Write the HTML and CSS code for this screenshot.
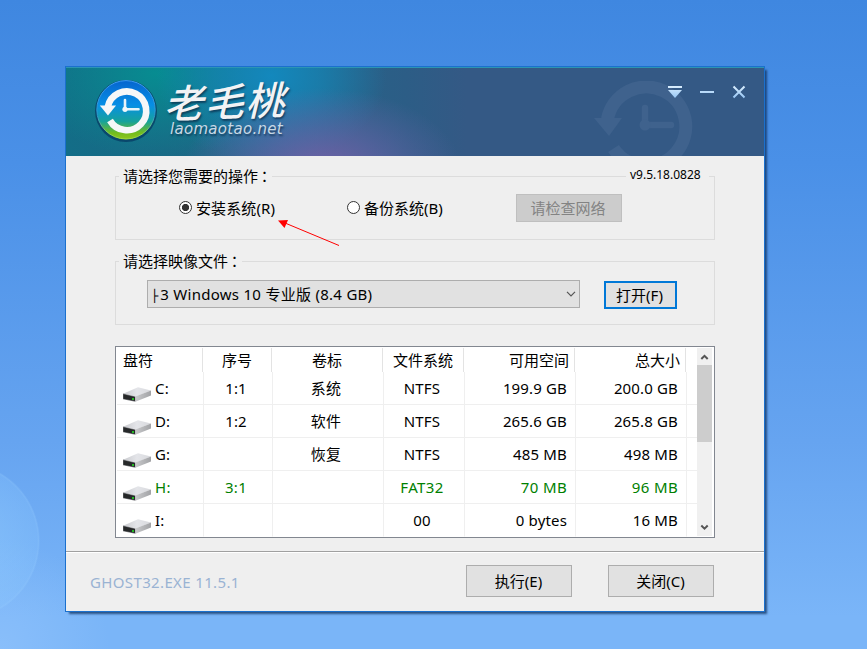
FILE: index.html
```html
<!DOCTYPE html>
<html lang="zh-CN">
<head>
<meta charset="utf-8">
<title>老毛桃</title>
<link rel="stylesheet" href="styles.css">
</head>
<body>
<svg width="0" height="0" class="defs">
  <defs>
    <linearGradient id="top" x1="0" x2="1"><stop offset="0" stop-color="#c9cace"/><stop offset=".5" stop-color="#e4e5e9"/><stop offset="1" stop-color="#d8d9dd"/></linearGradient>
    <linearGradient id="side" x1="0" x2="1"><stop offset="0" stop-color="#c9cacc"/><stop offset="1" stop-color="#a2a3a6"/></linearGradient>
    <symbol id="drive" viewBox="0 0 28 15">
      <path d="M0 6.800 15 .3 28 3.600 12.300 9.800Z" fill="url(#top)"/>
      <path d="M12.300 9.600 28 3.600V8.600L12.300 14.800Z" fill="url(#side)"/>
      <path d="M0 6.600 12.300 9.600V14.800L0 12.300Z" fill="#77797b"/>
      <path d="M.4 7.200 12 10V14L.4 11.800Z" fill="#262829"/>
      <rect x="9" y="11" width="2" height="2" fill="#22b822"/>
    </symbol>
  </defs>
</svg>
<main class="window">
  <header class="titlebar">
    <svg class="watermark" width="100" height="75" viewBox="593 81 100 75">
      <g fill="none" stroke="#3f628d">
        <path d="M607.500 119A39.500 39.500 0 1 1 613.500 148.500" stroke-width="13"/>
        <path d="M645 108V125H671" stroke-width="6.500" stroke-linecap="round"/>
      </g>
      <path d="M594 118H622L609 136Z" fill="#3f628d"/>
      <circle cx="645" cy="125" r="5.500" fill="#3f628d"/>
    </svg>
    <svg class="logo" width="66" height="66" viewBox="93 76 66 66">
      <defs>
        <linearGradient id="disc" x1="0" y1="0" x2="0" y2="1"><stop offset="0" stop-color="#0665cf"/><stop offset=".42" stop-color="#078fe5"/><stop offset=".7" stop-color="#17a29b"/><stop offset=".9" stop-color="#74bd1c"/><stop offset="1" stop-color="#8fc51e"/></linearGradient>
        <linearGradient id="rim" x1="0" y1="0" x2="0" y2="1"><stop offset="0" stop-color="#3b9bf3"/><stop offset=".6" stop-color="#2e9ad0"/><stop offset="1" stop-color="#a3dc38"/></linearGradient>
      </defs>
      <circle cx="126" cy="110" r="31" fill="#073a63" opacity=".75"/>
      <circle cx="126" cy="108.800" r="29.200" fill="url(#disc)" stroke="url(#rim)"/>
      <path d="M107.800 106A19.400 19.400 0 1 1 110 119.500" fill="none" stroke="#f6f7f8" stroke-width="6.600"/>
      <path d="M99.800 104.500H116L108 114.500Z" fill="#f6f7f8"/>
      <path d="M125 99V108.300H138.500" fill="none" stroke="#e6f4fa" stroke-width="2.600" stroke-linecap="round"/>
      <circle cx="125" cy="108.300" r="2.600" fill="#eef8fc"/>
    </svg>
    <div class="brand"><span class="name">老毛桃</span><span class="site">laomaotao.net</span></div>
    <svg class="controls" width="80" height="16" viewBox="667 85 80 16">
      <defs><linearGradient id="glyph" gradientUnits="userSpaceOnUse" x1="0" y1="85" x2="0" y2="99"><stop stop-color="#e0f2ff"/><stop offset="1" stop-color="#91c3f4"/></linearGradient></defs>
      <g fill="url(#glyph)"><path d="M668 86H682V88H668ZM668 90H682L675 98Z"/><rect x="700" y="91" width="14" height="2"/></g>
      <path d="M733.500 86.500 744.500 97.500M744.500 86.500 733.500 97.500" stroke="url(#glyph)" stroke-width="2"/>
    </svg>
  </header>
  <section class="body">
    <div class="group action">
      <div class="legend">请选择您需要的操作<i lang="zh-TW">：</i></div>
      <div class="version">v9.5.18.0828</div>
      <div class="choices">
        <label class="radio first"><span class="dot on"></span>安装系统(R)</label>
        <label class="radio second"><span class="dot"></span>备份系统(B)</label>
        <button class="btn network" disabled>请检查网络</button>
      </div>
      <svg class="pointer" width="64" height="29" viewBox="277 218 64 29"><path d="M285 223 339 245.500" stroke="#f00" fill="none"/><path d="M278 220.500 288 220 284.500 228Z" fill="#f00"/></svg>
    </div>
    <div class="group image">
      <div class="legend">请选择映像文件<i lang="zh-TW">：</i></div>
      <div class="choices">
        <div class="combo"><span><span class="branch">├</span>3 Windows 10 专业版 (8.4 GB)</span><svg width="10" height="6" viewBox="0 0 10 6"><path d="M1 .8 5 4.800 9 .8" fill="none" stroke="#555" stroke-width="1.200"/></svg></div>
        <button class="btn open">打开(F)</button>
      </div>
    </div>
    <div class="list">
      <div class="table">
        <div class="row head"><div>盘符</div><div>序号</div><div>卷标</div><div>文件系统</div><div>可用空间</div><div>总大小</div><div></div></div>
        <div class="row"><div><svg width="28" height="15"><use href="#drive"/></svg>C:</div><div>1:1</div><div>系统</div><div>NTFS</div><div>199.9 GB</div><div>200.0 GB</div><div></div></div>
        <div class="row"><div><svg width="28" height="15"><use href="#drive"/></svg>D:</div><div>1:2</div><div>软件</div><div>NTFS</div><div>265.6 GB</div><div>265.8 GB</div><div></div></div>
        <div class="row"><div><svg width="28" height="15"><use href="#drive"/></svg>G:</div><div></div><div>恢复</div><div>NTFS</div><div>485 MB</div><div>498 MB</div><div></div></div>
        <div class="row green"><div><svg width="28" height="15"><use href="#drive"/></svg>H:</div><div>3:1</div><div></div><div>FAT32</div><div>70 MB</div><div>96 MB</div><div></div></div>
        <div class="row"><div><svg width="28" height="15"><use href="#drive"/></svg>I:</div><div></div><div></div><div>00</div><div>0 bytes</div><div>16 MB</div><div></div></div>
      </div>
      <div class="scroll">
        <svg width="15" height="17" viewBox="0 0 15 17"><path d="M4.300 11 7.500 7.800 10.700 11" fill="none" stroke="#555" stroke-width="2"/></svg>
        <div class="thumb"></div>
        <svg width="15" height="17" viewBox="0 0 15 17"><path d="M4.300 6.500 7.500 9.700 10.700 6.500" fill="none" stroke="#555" stroke-width="2"/></svg>
      </div>
    </div>
  </section>
  <footer class="footer">
    <span class="engine">GHOST32.EXE 11.5.1</span>
    <button class="btn">执行(E)</button>
    <button class="btn">关闭(C)</button>
  </footer>
</main>
</body>
</html>
```
FILE: styles.css
```css
* { box-sizing: border-box; }
body {
  margin: 0;
  height: 649px;
  padding: 66px 0 0 65px;
  overflow: hidden;
  font: 15px/20px "Noto Sans", "Noto Sans CJK SC", sans-serif;
  color: #000;
  background:
    radial-gradient(circle at -39px 541px, rgba(150, 208, 255, .5) 0, rgba(140, 200, 255, .28) 76px, rgba(150, 205, 255, .35) 77.5px, transparent 79px),
    radial-gradient(circle at 0 649px, rgba(160, 205, 255, .4), transparent 110px),
    linear-gradient(#3f87e0, #4a90e7 25%, #66a4f0 68%, #7ab5f8 95%);
}
.defs { position: absolute; }
svg { display: block; flex: none; }
.window {
  width: 700px;
  height: 546px;
  border: 1px solid #1b70cd;
  background: #efefef;
  display: flex;
  flex-direction: column;
  box-shadow: 3px 3px 2px -1px rgba(15, 50, 95, .75);
}
.titlebar {
  height: 89px;
  flex: none;
  position: relative;
  display: flex;
  border-top: 1px solid #2b94b4;
  background:
    radial-gradient(ellipse 140px 84px at 256px 104px, rgba(122, 96, 170, .9), rgba(108, 98, 168, .6) 45%, transparent),
    radial-gradient(ellipse 115px 90px at 205px 8px, #1388bd, rgba(20, 135, 185, .65) 45%, transparent),
    radial-gradient(ellipse 130px 85px at 90px 5px, #078c91, transparent),
    linear-gradient(90deg, #136d87, #196985 100px, #256689 230px, #2c5d86 340px, #345985 400px);
}
.watermark { position: absolute; left: 527px; top: 13px; }
.logo { margin: 9px 0 0 27px; }
.brand {
  display: flex;
  flex-direction: column;
  margin: 11px 0 0 5px;
  color: #f2f3f5;
  text-shadow: 1px 2px 2px rgba(10, 40, 70, .7);
  width: 143px;
}
.name {
  font: italic 500 39px/40px "Noto Sans CJK SC", sans-serif;
  height: 42px;
  letter-spacing: 1.8px;
  transform: skewY(-2deg);
}
.site {
  font: italic 15px/17px "DejaVu Sans", sans-serif;
  letter-spacing: .3px;
  padding-left: 6px;
  color: #c8d9e6;
}
.controls { position: relative; margin: 17px 17px 0 auto; }
.body { height: 395px; flex: none; padding: 20px 49px 0; }
.group {
  border: 1px solid #dcdcdc;
  width: 600px;
  position: relative;
}
.action { height: 64px; margin-bottom: 21px; }
.image { height: 64px; margin-bottom: 21px; }
.legend, .version {
  position: absolute;
  top: -11px;
  left: 3px;
  height: 20px;
  padding: 0 0 0 4px;
  background: #efefef;
  white-space: nowrap;
}
.legend i { font: 15px/1 "Noto Sans CJK TC", sans-serif; margin-left: -1px; }
.version { left: auto; right: 5px; top: -12px; width: 83px; padding: 0 4px; font-size: 12px; letter-spacing: 0; }
.choices { display: flex; }
.action .choices { padding-top: 17px; }
.image .choices { padding: 18px 0 0 31px; }
.radio { display: flex; align-items: center; gap: 4px; height: 28px; letter-spacing: .1px; white-space: nowrap; }
.first { margin-left: 63px; width: 168px; }
.second { width: 169px; letter-spacing: 0; }
.dot {
  width: 13px;
  height: 13px;
  border: 1px solid #333;
  border-radius: 50%;
  background: #fff;
  margin-top: -1px;
}
.on { background: radial-gradient(circle, #333 3.2px, #fff 4px); }
.btn {
  width: 106px;
  height: 32px;
  border: 1px solid #adadad;
  background: #e1e1e1;
  font: inherit;
  color: #000;
  padding: 0 1px 0 0;
  flex: none;
}
.network { height: 28px; background: #ccc; border-color: #bfbfbf; color: #838383; padding-right: 2px; }
.pointer { position: absolute; left: 161px; top: 41px; }
.combo {
  width: 433px;
  height: 28px;
  border: 1px solid #adadad;
  background: #e1e1e1;
  display: flex;
  align-items: center;
  justify-content: space-between;
  padding: 0 3px 0 3px;
  letter-spacing: .28px;
}
.branch { font: 12px/14px "DejaVu Sans", sans-serif; letter-spacing: 2px; }
.open { width: 73px; height: 28px; margin: 1px 0 0 24px; border: 2px solid #0078d7; padding-right: 2px; }
.list {
  width: 600px;
  height: 192px;
  border: 1px solid #828790;
  background: #fff;
  padding: 1px;
  display: flex;
  overflow: hidden;
}
.table { width: 580px; flex: none; }
.row {
  display: grid;
  grid-template-columns: 87px 69px 111px 81px 111px 111px 10px;
  height: 33px;
  letter-spacing: .15px;
}
.row > div {
  border-right: 1px solid #efefef;
  border-bottom: 1px solid #efefef;
  display: flex;
  align-items: center;
  justify-content: center;
  white-space: nowrap;
  padding-right: 4px;
}
.row > div:first-child { justify-content: flex-start; padding-left: 6px; gap: 4px; }
.row > div:first-child svg { margin-top: 12px; }
.row > div:nth-child(5), .row > div:nth-child(6) { justify-content: flex-end; padding-right: 8px; }
.row > div:last-child { border-right: 0; }
.row:last-child > div { border-bottom-color: transparent; }
.row.head { height: 24px; letter-spacing: 0; grid-template-columns: 86px 69px 111px 81px 111px 111px 11px; }
.row.head > div { border-bottom: 0; padding-right: 0; border-color: #e3e3e3; }
.row.head > div:nth-child(5), .row.head > div:nth-child(6) { padding-right: 5px; }
.row.head > div { padding-bottom: 1px; }
.row.green { color: #008000; letter-spacing: .35px; }
.scroll { width: 16px; background: #f0f0f0; border-right: 1px solid #fff; display: flex; flex-direction: column; }
.thumb { height: 77px; background: #cdcdcd; margin-bottom: auto; }
.footer {
  border-top: 1px solid #a0a0a0;
  box-shadow: inset 0 1px #fff;
  flex: 1;
  display: flex;
  align-items: flex-start;
  padding: 13px 50px 0 24px;
  gap: 36px;
}
.engine { color: #9ab3d3; margin: 7px auto 0 0; letter-spacing: .36px; }
```
